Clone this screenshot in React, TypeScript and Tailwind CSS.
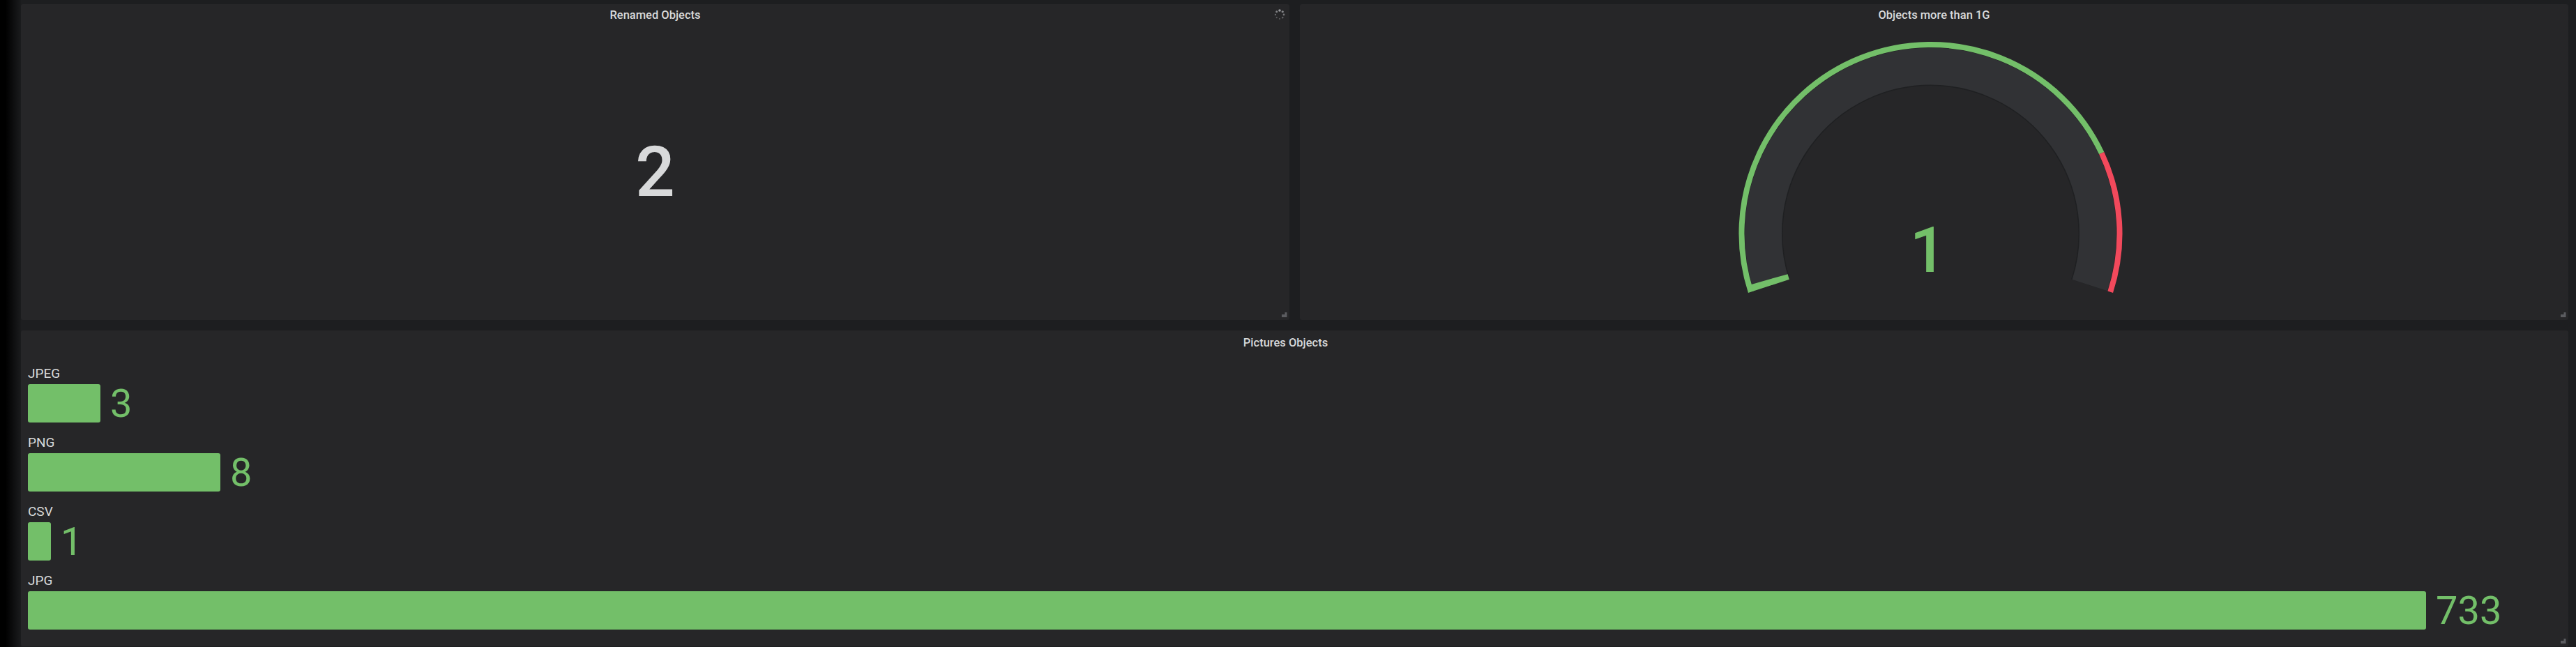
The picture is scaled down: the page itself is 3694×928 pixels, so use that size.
import React from "react";

const GREEN = "#73bf69";
const RED = "#f2495c";

function ResizeHandle() {
  return (
    <svg className="absolute right-[3px] bottom-[3px]" width="8" height="8" viewBox="0 0 8 8">
      <polygon points="4.5,0 7.5,0 7.5,7 0,7 0,3 4.5,3" fill="#5b5c60" />
    </svg>
  );
}

function Spinner() {
  const dots = Array.from({ length: 8 }, (_, i) => {
    const a = (i / 8) * Math.PI * 2 - Math.PI / 2;
    const r = 6;
    const size = [1.8, 1.6, 1.4, 1.2, 1.1, 1.1, 1.2, 1.5][i];
    const op = [0.95, 0.8, 0.65, 0.5, 0.45, 0.45, 0.55, 0.75][i];
    return (
      <circle key={i} cx={8 + r * Math.cos(a)} cy={8 + r * Math.sin(a)} r={size} fill="#9fa0a3" opacity={op} />
    );
  });
  return (
    <svg className="absolute right-[6px] top-[7px]" width="16" height="16" viewBox="0 0 16 16">
      {dots}
    </svg>
  );
}

function Gauge() {
  const cx = 344.5;
  const cy = 297;
  const start = 198;
  const sweep = 216;
  const end = start - sweep;
  const pt = (r: number, deg: number) => {
    const t = (deg * Math.PI) / 180;
    return [cx + r * Math.cos(t), cy - r * Math.sin(t)];
  };
  const arc = (r: number, a1: number, a2: number) => {
    const [x1, y1] = pt(r, a1);
    const [x2, y2] = pt(r, a2);
    const large = a1 - a2 > 180 ? 1 : 0;
    return `M ${x1.toFixed(2)} ${y1.toFixed(2)} A ${r} ${r} 0 ${large} 1 ${x2.toFixed(2)} ${y2.toFixed(2)}`;
  };
  const thr = start - sweep * 0.8;
  const val = start - sweep * 0.01;
  return (
    <svg width="700" height="421" viewBox="0 0 700 421">
      <path d={arc(240, start, end)} stroke="#1f2022" strokeWidth={56} fill="none" />
      <path d={arc(240, start, end)} stroke="#313235" strokeWidth={53} fill="none" />
      <path d={arc(240.5, start, val)} stroke={GREEN} strokeWidth={55} fill="none" />
      <path d={arc(271, start, thr)} stroke={GREEN} strokeWidth={8} fill="none" />
      <path d={arc(271, thr, end)} stroke={RED} strokeWidth={8} fill="none" />
      <text
        x={cx - 4}
        y={352}
        textAnchor="middle"
        fill={GREEN}
        fontSize={91}
        fontWeight={500}
        fontFamily="Roboto, 'Liberation Sans', sans-serif"
      >
        1
      </text>
    </svg>
  );
}

const bars = [
  { label: "JPEG", value: "3", w: 104 },
  { label: "PNG", value: "8", w: 276 },
  { label: "CSV", value: "1", w: 33 },
  { label: "JPG", value: "733", w: 3439 },
];

export default function App() {
  return (
    <div className="flex h-[928px] w-full bg-[#1d1e20] font-[Roboto,'Liberation_Sans',sans-serif] text-[#d8d9da] overflow-hidden">
      <div className="w-[30px] shrink-0 bg-[linear-gradient(to_right,#000_8px,#1d1e20_32px)]" />
      <div className="flex-1 pt-[6px] pr-[11px] flex flex-col gap-[15px]">
        <div className="grid grid-cols-2 gap-[15px] h-[453px]">
          <div className="relative flex flex-col rounded-[3px] bg-[#262628]">
            <div className="h-[32px] flex items-center justify-center text-[16.5px] font-medium">
              Renamed Objects
            </div>
            <Spinner />
            <div className="flex-1 flex items-center justify-center">
              <span className="text-[100px] leading-none font-medium text-[#d8d9da] -mt-[4px]">2</span>
            </div>
            <ResizeHandle />
          </div>
          <div className="relative flex flex-col rounded-[3px] bg-[#262628]">
            <div className="h-[32px] flex items-center justify-center text-[16.5px] font-medium">
              Objects more than 1G
            </div>
            <div className="flex-1 flex justify-center overflow-hidden">
              <Gauge />
            </div>
            <ResizeHandle />
          </div>
        </div>
        <div className="relative flex flex-col rounded-[3px] bg-[#262628] h-[453px]">
          <div className="h-[32px] mt-[2px] flex items-center justify-center pr-[26px] text-[16.5px] font-medium">
            Pictures Objects
          </div>
          <div className="flex flex-col gap-[18px] pl-[10px] pt-[17px]">
            {bars.map((b) => (
              <div key={b.label} className="flex flex-col">
                <div className="h-[22px] leading-[22px] text-[19px] text-[#d8d9da]">{b.label}</div>
                <div className="mt-[4px] flex items-center h-[55px]">
                  <div className="h-[55px] rounded-[3px] bg-[#73bf69]" style={{ width: b.w }} />
                  <span className="ml-[14px] text-[56px] leading-none text-[#73bf69]">{b.value}</span>
                </div>
              </div>
            ))}
          </div>
          <ResizeHandle />
        </div>
      </div>
    </div>
  );
}
